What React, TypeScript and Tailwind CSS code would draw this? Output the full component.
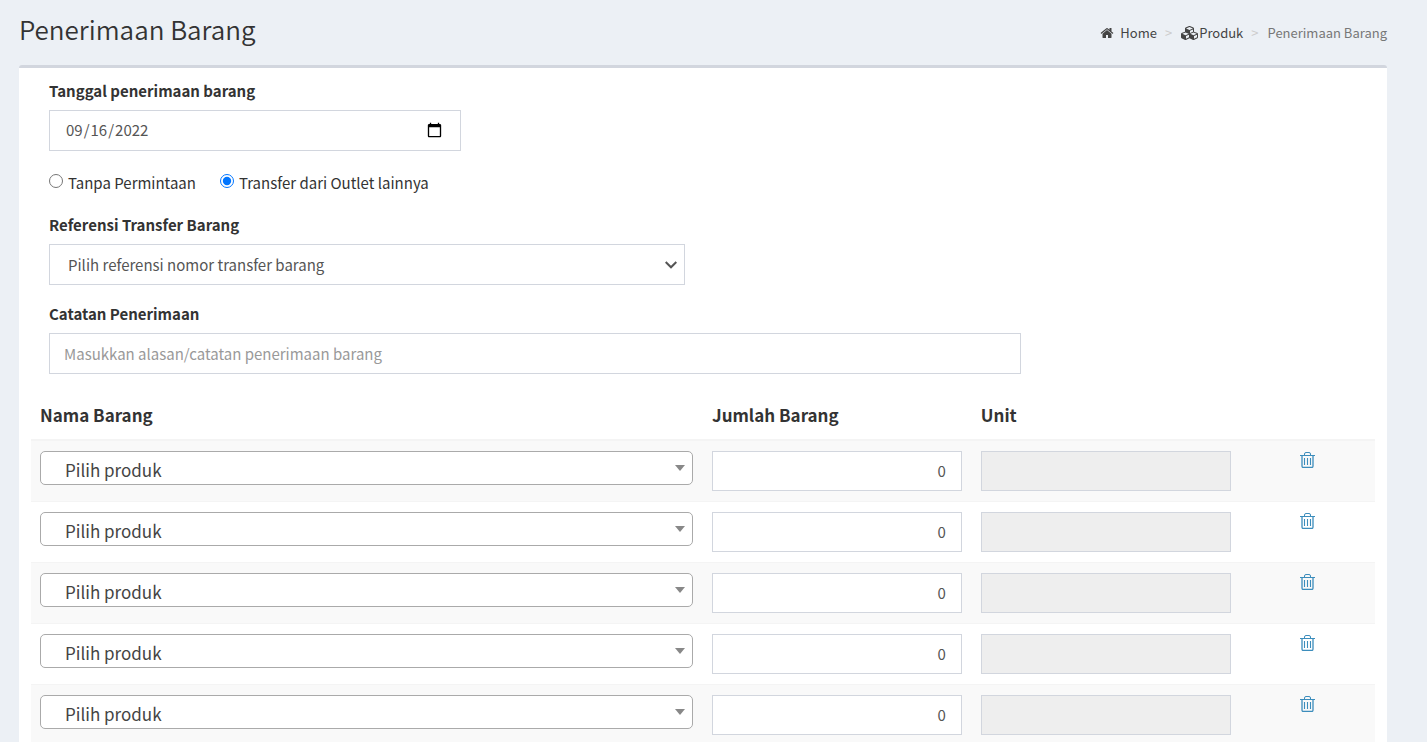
import { useState } from 'react'

const ROWS = [1, 2, 3, 4, 5]

const LABEL = 'mb-[7px] block text-[15px] leading-6 font-bold'
const FIELD = 'block h-[41px] w-full border border-[#d2d6de] bg-white text-[15px] text-[#555] outline-none'
const CELL = 'py-[10px] pr-[10px] pl-[9px]'

function HomeIcon() {
  return (
    <svg viewBox="0 0 1792 1792" className="h-[14px] w-[14px] fill-current" aria-hidden="true">
      <path d="M1472 992v480q0 26-19 45t-45 19h-384v-384h-256v384h-384q-26 0-45-19t-19-45v-480q0-1 .5-3t.5-3l575-474 575 474q1 2 1 6zm223-69l-62 74q-8 9-21 11h-3q-13 0-21-7l-692-577-692 577q-12 8-24 7-13-2-21-11l-62-74q-8-10-7-23.5t11-21.5l719-599q32-26 76-26t76 26l244 204v-195q0-14 9-23t23-9h192q14 0 23 9t9 23v408l219 182q10 8 11 21.5t-7 23.5z" />
    </svg>
  )
}

function CubesIcon() {
  return (
    <svg viewBox="0 0 2304 1792" className="h-[14px] w-[18px] fill-current" aria-hidden="true">
      <path d="M640 1632l384-192v-314l-384 164v342zm-64-454l404-173-404-173-404 173zm1088 454l384-192v-314l-384 164v342zm-64-454l404-173-404-173-404 173zm-448-293l384-165v-266l-384 164v267zm-64-379l441-189-441-189-441 189zm1088 518v416q0 36-19 67t-52 47l-448 224q-25 14-57 14t-57-14l-448-224q-4-2-7-4-2 2-7 4l-448 224q-25 14-57 14t-57-14l-448-224q-33-16-52-47t-19-67v-416q0-38 21.5-70t56.5-48l434-186v-400q0-38 21.5-70t56.5-48l448-192q23-10 50-10t50 10l448 192q35 16 56.5 48t21.5 70v400l434 186q36 16 57 48t21 70z" />
    </svg>
  )
}

function TrashIcon() {
  return (
    <svg viewBox="0 0 15 16" className="h-4 w-[15px] fill-none stroke-current" aria-hidden="true">
      <path d="M0 3.5h15M4.5 3.5V2q0-1.5 1.5-1.5h3q1.5 0 1.5 1.5v1.5" />
      <path d="M2 3.5V14q0 1.5 1.3 1.5h8.4q1.3 0 1.3-1.5V3.5" strokeWidth="1.3" />
      <path d="M4.5 6v7M7.5 6v7M10.5 6v7" strokeWidth="1.1" />
    </svg>
  )
}

function ItemRow({ id }: { id: number }) {
  return (
    <tr className="border-t border-[#f4f4f4] align-top odd:bg-[#f9f9f9]">
      <td className={CELL}>
        <div className="relative">
          <select
            aria-label={`Nama Barang ${id}`}
            className="block h-[34px] w-full appearance-none rounded-[5px] border border-[#aaa] bg-white pt-[4px] pl-6 text-[17px] leading-6 text-[#444] outline-none"
          >
            <option>Pilih produk</option>
          </select>
          <svg viewBox="0 0 10 6" className="pointer-events-none absolute top-[14px] right-2 h-[6px] w-[10px] fill-[#888]" aria-hidden="true">
            <path d="M0 0h10L5 6z" />
          </svg>
        </div>
      </td>
      <td className={CELL}>
        <input
          type="text"
          inputMode="numeric"
          defaultValue="0"
          aria-label={`Jumlah Barang ${id}`}
          className="block h-10 w-full border border-[#d2d6de] bg-white px-[15px] pb-px text-right text-[15px] text-[#555] outline-none"
        />
      </td>
      <td className={CELL}>
        <input
          type="text"
          readOnly
          aria-label={`Unit ${id}`}
          className="block h-10 w-full border border-[#d2d6de] bg-[#eee] px-[15px] text-[15px] text-[#555] outline-none"
        />
      </td>
      <td className="pt-[11px] text-center">
        <button type="button" aria-label={`Hapus ${id}`} className="align-top text-[#3c8dbc]">
          <TrashIcon />
        </button>
      </td>
    </tr>
  )
}

export default function App() {
  const [source, setSource] = useState('transfer')

  return (
    <div className="h-screen overflow-hidden bg-[#ecf0f5] pr-10 pl-[19px] font-['Noto_Sans_CJK_JP',sans-serif] text-[#333]">
      <header className="flex h-[65px] items-center justify-between">
        <h1 className="pb-2 text-[26px] leading-8 font-[350]">Penerimaan Barang</h1>
        <nav aria-label="Breadcrumb" className="flex items-center text-[13px] leading-5">
          <a href="#" className="flex items-center gap-[6px] text-[#444]">
            <HomeIcon />
            Home
          </a>
          <span className="pr-[9px] pl-2 text-[#ccc]">&gt;</span>
          <a href="#" className="flex items-center text-[#444]">
            <CubesIcon />
            Produk
          </a>
          <span className="pr-[9px] pl-2 text-[#ccc]">&gt;</span>
          <span className="text-[#777]">Penerimaan Barang</span>
        </nav>
      </header>

      <main className="rounded-[3px] border-t-[3px] border-[#d2d6de] bg-white px-3 pt-[11px] pb-3">
        <form>
          <div className="w-1/3 px-[18px]">
            <label htmlFor="tanggal" className={LABEL}>Tanggal penerimaan barang</label>
            <input
              id="tanggal"
              type="date"
              defaultValue="2022-09-16"
              className={`${FIELD} px-[15px] [&::-webkit-calendar-picker-indicator]:h-[17px] [&::-webkit-calendar-picker-indicator]:w-[17px]`}
            />
          </div>

          <div className="mt-5 flex gap-6 px-[18px] text-[15px] leading-6">
            <label className="flex gap-[5px]">
              <input
                type="radio"
                name="sumber"
                checked={source === 'tanpa'}
                onChange={() => setSource('tanpa')}
                className="mt-[3px] h-[14px] w-[14px]"
              />
              Tanpa Permintaan
            </label>
            <label className="flex gap-[5px]">
              <input
                type="radio"
                name="sumber"
                checked={source === 'transfer'}
                onChange={() => setSource('transfer')}
                className="mt-[3px] h-[14px] w-[14px]"
              />
              Transfer dari Outlet lainnya
            </label>
          </div>

          <div className="mt-[18px] w-1/2 px-[18px]">
            <label htmlFor="referensi" className={LABEL}>Referensi Transfer Barang</label>
            <div className="relative">
              <select id="referensi" className={`${FIELD} appearance-none px-[18px] pt-[2px]`}>
                <option>Pilih referensi nomor transfer barang</option>
              </select>
              <svg viewBox="0 0 12 8" className="pointer-events-none absolute top-[17px] right-2 h-2 w-3 fill-none stroke-[#555] stroke-2" aria-hidden="true">
                <path d="M.7 1L6 6.3 11.3 1" />
              </svg>
            </div>
          </div>

          <div className="mt-[17px] w-3/4 px-[18px]">
            <label htmlFor="catatan" className={LABEL}>Catatan Penerimaan</label>
            <input
              id="catatan"
              type="text"
              placeholder="Masukkan alasan/catatan penerimaan barang"
              className={`${FIELD} px-[14px] placeholder:text-[#999]`}
            />
          </div>

          <table className="mt-5 w-full table-fixed border-collapse">
            <thead>
              <tr className="border-b-2 border-[#f4f4f4] text-left text-[17px] leading-6">
                <th className="w-1/2 px-[9px] pt-[9px] pb-3 font-bold">Nama Barang</th>
                <th className="w-1/5 px-[9px] pt-[9px] pb-3 font-bold">Jumlah Barang</th>
                <th className="w-1/5 px-[9px] pt-[9px] pb-3 font-bold">Unit</th>
                <td className="w-1/10"></td>
              </tr>
            </thead>
            <tbody>
              {ROWS.map((id) => (
                <ItemRow key={id} id={id} />
              ))}
            </tbody>
          </table>
        </form>
      </main>
    </div>
  )
}
